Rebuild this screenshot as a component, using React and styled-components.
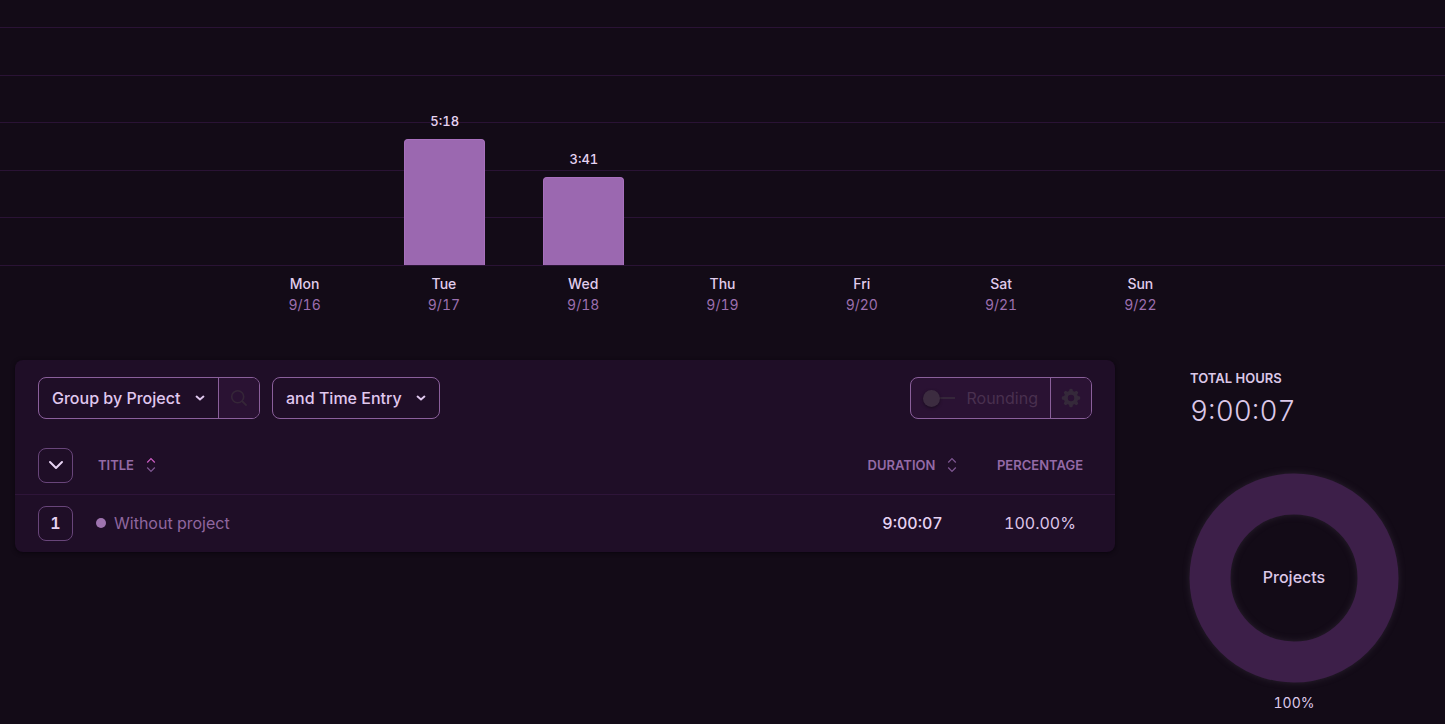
import styled, { createGlobalStyle } from "styled-components";

const GlobalStyle = createGlobalStyle`
  * {
    box-sizing: border-box;
  }

  body {
    margin: 0;
    background: #130b17;
    color: #dcc8e8;
    font-family: Inter, "Liberation Sans", sans-serif;
    font-size: 16px;
    font-variant-numeric: tabular-nums;
  }

  button,
  select {
    font: inherit;
    color: inherit;
  }
`;

const Page = styled.main`
  min-height: 100vh;
  overflow: hidden;
`;

/* Bar chart */
const Chart = styled.section`
  display: grid;
  grid-template-rows: 266px auto;
`;

const GridLines = styled.div`
  grid-area: 1 / 1;
  display: grid;
  grid-template-rows: 28px repeat(5, 1fr);
`;

const GridLine = styled.div`
  border-bottom: 1px solid #2a1335;
`;

const Columns = styled.div`
  display: grid;
  grid-template-columns: repeat(7, 1fr);
  padding: 0 235px;
`;

const Bars = styled(Columns)`
  grid-area: 1 / 1;
  padding: 0 235px 1px 236px;
`;

const BarColumn = styled.div`
  display: flex;
  flex-direction: column;
  align-items: center;
  justify-content: flex-end;
  gap: 10px;
`;

const BarLabel = styled.span`
  font-size: 13px;
  line-height: 16px;
  font-weight: 500;
  color: #e6d3f2;
`;

const Bar = styled.div`
  width: 81px;
  border: 1px solid #a870bd;
  border-bottom: 0;
  border-radius: 4px 4px 0 0;
  background: #9b68b0;
`;

const Axis = styled(Columns)`
  padding-top: 7px;
`;

const Day = styled.div`
  text-align: center;
  font-size: 14px;
  line-height: 21px;
  font-weight: 500;
  color: #e0cdec;
`;

const DayDate = styled.div`
  color: #9c6fae;
  font-weight: 400;
`;

/* Report */
const Report = styled.div`
  display: grid;
  grid-template-columns: 1fr 210px;
  gap: 74px;
  align-items: start;
  padding: 45px 46px 0 15px;
`;

const Panel = styled.section`
  border-radius: 8px;
  background: #1f0e27;
  box-shadow: 0 1px 4px #0a050d;
  overflow: hidden;
`;

const Toolbar = styled.div`
  display: flex;
  gap: 12px;
  padding: 17px 23px 18px;
`;

const ControlGroup = styled.div`
  display: flex;
  height: 42px;
  border: 1px solid #8a5f9b;
  border-radius: 8px;
  overflow: hidden;
  background: ${(props) => (props.$muted ? "#2a1233" : "transparent")};
  margin-left: ${(props) => (props.$end ? "auto" : 0)};
`;

const SelectBox = styled.label`
  display: grid;
  align-items: center;

  select,
  svg {
    grid-area: 1 / 1;
  }

  svg {
    justify-self: end;
    margin-right: 12px;
    pointer-events: none;
  }
`;

const Select = styled.select`
  appearance: none;
  height: 40px;
  padding: 0 37px 0 13px;
  border: 0;
  background: transparent;
  font-weight: 500;
  color: #e0c8ef;
`;

const IconButton = styled.button`
  display: grid;
  place-items: center;
  width: 41px;
  padding: 0;
  border: 0;
  border-left: 1px solid #8a5f9b;
  background: #2a1233;
  color: #352638;
`;

const Rounding = styled.label`
  display: flex;
  align-items: center;
  gap: 11px;
  padding: 0 12px;
  color: #49304f;
`;

const Switch = styled.input`
  appearance: none;
  display: flex;
  align-items: center;
  width: 32px;
  height: 18px;
  margin: 0;
  background: linear-gradient(#35263a, #35263a) right center / 17px 2px
    no-repeat;

  &::before {
    content: "";
    width: 17px;
    height: 17px;
    border-radius: 50%;
    background: #3c2c40;
    box-shadow: 0 1px 3px #190b1f;
  }
`;

const Table = styled.table`
  width: 100%;
  border-collapse: collapse;
  table-layout: fixed;
`;

const Th = styled.th`
  width: ${(props) => props.$width};
  height: 57px;
  padding: 0;
  padding-left: ${(props) => props.$indent || 0};
  border-bottom: 1px solid #2e1539;
  text-align: ${(props) => props.$align || "center"};
  font-size: 13px;
  font-weight: 600;
  color: #946aa6;
  text-transform: uppercase;
`;

const Td = styled.td`
  height: 58px;
  padding: 0;
  padding-left: ${(props) => props.$indent || 0};
  text-align: ${(props) => props.$align || "center"};
  font-weight: ${(props) => props.$weight || 400};
  color: ${(props) => props.$color || "#dcc4e8"};
`;

const SortButton = styled.button`
  display: inline-flex;
  align-items: center;
  gap: 12px;
  padding: 0;
  border: 0;
  background: none;
  text-transform: inherit;
`;

const SquareButton = styled.button`
  display: grid;
  place-items: center;
  width: 35px;
  height: 35px;
  padding: 0;
  border: 1px solid #68457a;
  border-radius: 8px;
  background: transparent;
  font-weight: 600;
  color: #e6d3f2;
`;

const Project = styled.div`
  display: flex;
  align-items: center;
  gap: 8px;
`;

const Dot = styled.span`
  width: 10px;
  height: 10px;
  border-radius: 50%;
  background: #9f74b0;
`;

/* Summary */
const Summary = styled.aside`
  display: flex;
  flex-direction: column;
  padding-top: 10px;
`;

const SummaryTitle = styled.h2`
  margin: 0 0 0 1px;
  font-size: 13px;
  line-height: 16px;
  font-weight: 600;
  text-transform: uppercase;
`;

const Total = styled.div`
  margin: 7px 0 44px 1px;
  font-size: 28px;
  line-height: 36px;
  font-weight: 300;
`;

const Donut = styled.div`
  display: grid;
  place-items: center;
  height: 210px;

  svg,
  span {
    grid-area: 1 / 1;
  }

  svg {
    overflow: visible;
    filter: drop-shadow(0 0 3px #2b2130);
  }

  span {
    z-index: 1;
    padding-bottom: 2px;
    font-weight: 500;
  }
`;

const Share = styled.div`
  margin-top: 10px;
  text-align: center;
  font-size: 14px;
  line-height: 20px;
`;

const days = [
  { name: "Mon", date: "9/16" },
  { name: "Tue", date: "9/17", label: "5:18", height: 126 },
  { name: "Wed", date: "9/18", label: "3:41", height: 88 },
  { name: "Thu", date: "9/19" },
  { name: "Fri", date: "9/20" },
  { name: "Sat", date: "9/21" },
  { name: "Sun", date: "9/22" },
];

function Caret() {
  return (
    <svg width="12" height="8" viewBox="0 0 12 8" fill="none" aria-hidden="true">
      <path
        d="M2.6 2.6 6 5.4 9.4 2.6"
        stroke="#e0c8ef"
        strokeWidth="2"
        strokeLinecap="round"
      />
    </svg>
  );
}

function SortIcon({ active }) {
  return (
    <svg width="10" height="16" viewBox="0 0 10 16" fill="none" aria-hidden="true">
      <path
        d="M1.2 5.5 5 1.6 8.8 5.5"
        stroke={active ? "#c95bc0" : "#7c5590"}
        strokeWidth="1.3"
      />
      <path d="M1.2 10.5 5 14.4 8.8 10.5" stroke="#7c5590" strokeWidth="1.3" />
    </svg>
  );
}

function GearIcon() {
  const teeth = [0, 45, 90, 135, 180, 225, 270, 315];

  return (
    <svg width="20" height="20" viewBox="0 0 20 20" aria-hidden="true">
      <circle cx="10" cy="10" r="5.2" fill="none" stroke="#35293a" strokeWidth="4" />
      {teeth.map((angle) => (
        <path
          key={angle}
          d="M7.8 4 8.6 1.1Q10 .3 11.4 1.1L12.2 4Z"
          fill="#35293a"
          transform={`rotate(${angle} 10 10)`}
        />
      ))}
    </svg>
  );
}

function WeekChart() {
  return (
    <Chart>
      <GridLines>
        {[0, 1, 2, 3, 4, 5].map((line) => (
          <GridLine key={line} />
        ))}
      </GridLines>
      <Bars>
        {days.map((day) => (
          <BarColumn key={day.date}>
            {day.label && (
              <>
                <BarLabel>{day.label}</BarLabel>
                <Bar style={{ height: day.height }} />
              </>
            )}
          </BarColumn>
        ))}
      </Bars>
      <Axis>
        {days.map((day) => (
          <Day key={day.date}>
            {day.name}
            <DayDate>{day.date}</DayDate>
          </Day>
        ))}
      </Axis>
    </Chart>
  );
}

function ReportToolbar() {
  return (
    <Toolbar>
      <ControlGroup>
        <SelectBox>
          <Select aria-label="Group by">
            <option>Group by Project</option>
          </Select>
          <Caret />
        </SelectBox>
        <IconButton disabled aria-label="Search">
          <svg width="18" height="18" viewBox="0 0 18 18" fill="none">
            <circle cx="7.7" cy="7.7" r="6" stroke="currentColor" strokeWidth="1.6" />
            <path d="m12 12 4.6 4.6" stroke="currentColor" strokeWidth="1.8" />
          </svg>
        </IconButton>
      </ControlGroup>
      <ControlGroup>
        <SelectBox>
          <Select aria-label="Then group by">
            <option>and Time Entry</option>
          </Select>
          <Caret />
        </SelectBox>
      </ControlGroup>
      <ControlGroup $muted $end>
        <Rounding>
          <Switch type="checkbox" role="switch" disabled />
          Rounding
        </Rounding>
        <IconButton disabled aria-label="Rounding settings">
          <GearIcon />
        </IconButton>
      </ControlGroup>
    </Toolbar>
  );
}

function ReportTable() {
  return (
    <Table>
      <thead>
        <tr>
          <Th $width="81px" $indent="23px">
            <SquareButton aria-label="Expand all">
              <svg width="16" height="10" viewBox="0 0 16 10" fill="none">
                <path
                  d="M2 2 8 8 14 2"
                  stroke="currentColor"
                  strokeWidth="2"
                  strokeLinecap="round"
                  strokeLinejoin="round"
                />
              </svg>
            </SquareButton>
          </Th>
          <Th $align="left" $indent="2px">
            <SortButton>
              Title <SortIcon active />
            </SortButton>
          </Th>
          <Th $width="105px">
            <SortButton>
              Duration <SortIcon />
            </SortButton>
          </Th>
          <Th $width="150px">Percentage</Th>
        </tr>
      </thead>
      <tbody>
        <tr>
          <Td $indent="23px">
            <SquareButton>1</SquareButton>
          </Td>
          <Td $align="left" $color="#8f669f">
            <Project>
              <Dot />
              Without project
            </Project>
          </Td>
          <Td $weight={500} $color="#e6d3f2">
            9:00:07
          </Td>
          <Td>100.00%</Td>
        </tr>
      </tbody>
    </Table>
  );
}

export default function App() {
  return (
    <>
      <GlobalStyle />
      <Page>
        <WeekChart />
        <Report>
          <Panel>
            <ReportToolbar />
            <ReportTable />
          </Panel>
          <Summary>
            <SummaryTitle>Total hours</SummaryTitle>
            <Total>9:00:07</Total>
            <Donut>
              <svg width="210" height="210" viewBox="0 0 210 210" aria-hidden="true">
                <circle
                  cx="105"
                  cy="105"
                  r="84"
                  fill="none"
                  stroke="#3d1f49"
                  strokeWidth="41"
                />
              </svg>
              <span>Projects</span>
            </Donut>
            <Share>100%</Share>
          </Summary>
        </Report>
      </Page>
    </>
  );
}
